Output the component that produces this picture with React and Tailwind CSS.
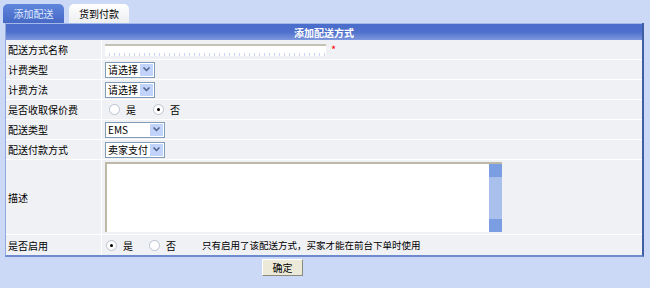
import React from "react";

const font = { fontFamily: '"Noto Sans CJK SC", "Liberation Sans", sans-serif' };

const Select = ({ label, width }) => (
  <div className={`flex h-[16px] items-center border border-[#7f9db9] bg-white ${width}`}>
    <span className="flex-1 whitespace-nowrap pl-[2px] text-[10px] leading-none text-black">{label}</span>
    <span className="mr-[1px] flex h-[12px] w-[13px] shrink-0 items-center justify-center bg-[#c1d3fb]">
      <svg width="7" height="5" viewBox="0 0 7 5">
        <path d="M0.5 0.5 L3.5 3.5 L6.5 0.5" fill="none" stroke="#4d6185" strokeWidth="1.5" />
      </svg>
    </span>
  </div>
);

const Radio = ({ checked, text }) => (
  <span className="flex items-center">
    <span className="flex h-[11px] w-[11px] items-center justify-center rounded-full border border-[#b9c3cf] bg-white">
      {checked && <span className="h-[3px] w-[3px] rounded-full bg-black" />}
    </span>
    <span className="ml-[6px] text-[10px]">{text}</span>
  </span>
);

const Row = ({ label, h = "h-[20px]", children }) => (
  <div className={`flex border-b border-white ${h}`}>
    <div className="flex w-[96px] items-center border-r border-white pl-[2px] text-[10px] text-black">
      {label}
    </div>
    <div className="flex flex-1 items-center pl-[3px]">{children}</div>
  </div>
);

export default function App() {
  return (
    <div className="h-[288px] w-[650px] bg-[#cbd8f6] pt-[4px] text-black" style={font}>
      <div className="flex h-[19px] items-end pl-[3px]">
        <div className="flex h-[19px] w-[61px] items-center justify-center rounded-t-[5px] bg-gradient-to-b from-[#5f86dc] to-[#4668c6] text-[10px] text-[#dfe8fb]">
          添加配送
        </div>
        <div className="ml-[5px] flex h-[19px] w-[60px] items-center justify-center rounded-t-[5px] bg-gradient-to-b from-[#ffffff] to-[#eceef0] text-[10px]">
          货到付款
        </div>
      </div>
      <div className="ml-[5px] w-[639px] border-l border-r-2 border-b-2 border-l-[#93a9dd] border-r-[#3f5ea6] border-b-[#6f8bd0] bg-[#f0f1f4]">
        <div className="flex h-[17px] items-center justify-center border-t border-[#a4b8ea] bg-gradient-to-b from-[#4a6dcb] via-[#4e70cc] to-[#7e97dd] text-[10px] font-bold text-white">
          添加配送方式
        </div>
        <Row label="配送方式名称">
          <div className="h-[12px] w-[221px] border-t-2 border-[#c4c2b4] bg-white bg-[repeating-linear-gradient(to_right,transparent_0px,transparent_4px,#c9d4f0_4px,#c9d4f0_5px)] bg-[length:100%_3px] bg-bottom bg-no-repeat" />
          <span className="ml-[5px] text-[11px] text-[#ff0000]">*</span>
        </Row>
        <Row label="计费类型">
          <Select label="请选择" width="w-[50px]" />
        </Row>
        <Row label="计费方法">
          <Select label="请选择" width="w-[50px]" />
        </Row>
        <Row label="是否收取保价费">
          <div className="flex items-center gap-[17px] pl-[4px]">
            <Radio text="是" />
            <Radio checked text="否" />
          </div>
        </Row>
        <Row label="配送类型">
          <Select label="EMS" width="w-[60px]" />
        </Row>
        <Row label="配送付款方式">
          <Select label="卖家支付" width="w-[60px]" />
        </Row>
        <Row label="描述" h="h-[75px]">
          <div className="flex h-[70px] w-[397px] border-t-2 border-l-2 border-[#bdb9a6] bg-white">
            <div className="flex-1" />
            <div className="flex w-[13px] flex-col bg-[#a9c0ec]">
              <div className="h-[13px] bg-[#7b9ee3]" />
              <div className="flex-1" />
              <div className="h-[13px] bg-[#7b9ee3]" />
            </div>
          </div>
        </Row>
        <div className="flex h-[20px]">
          <div className="flex w-[96px] items-center border-r border-white pl-[2px] text-[10px]">
            是否启用
          </div>
          <div className="flex flex-1 items-center pl-[4px]">
            <div className="flex items-center gap-[16px]">
              <Radio checked text="是" />
              <Radio text="否" />
            </div>
            <span className="ml-[26px] text-[9.5px]">只有启用了该配送方式，买家才能在前台下单时使用</span>
          </div>
        </div>
      </div>
      <div className="flex pl-[262px] pt-[2px]">
        <button className="h-[17px] w-[41px] border border-b-[#8a8a7a] border-r-[#8a8a7a] border-t-white border-l-white bg-[#ece9d8] text-[10px] leading-none">
          确定
        </button>
      </div>
    </div>
  );
}
